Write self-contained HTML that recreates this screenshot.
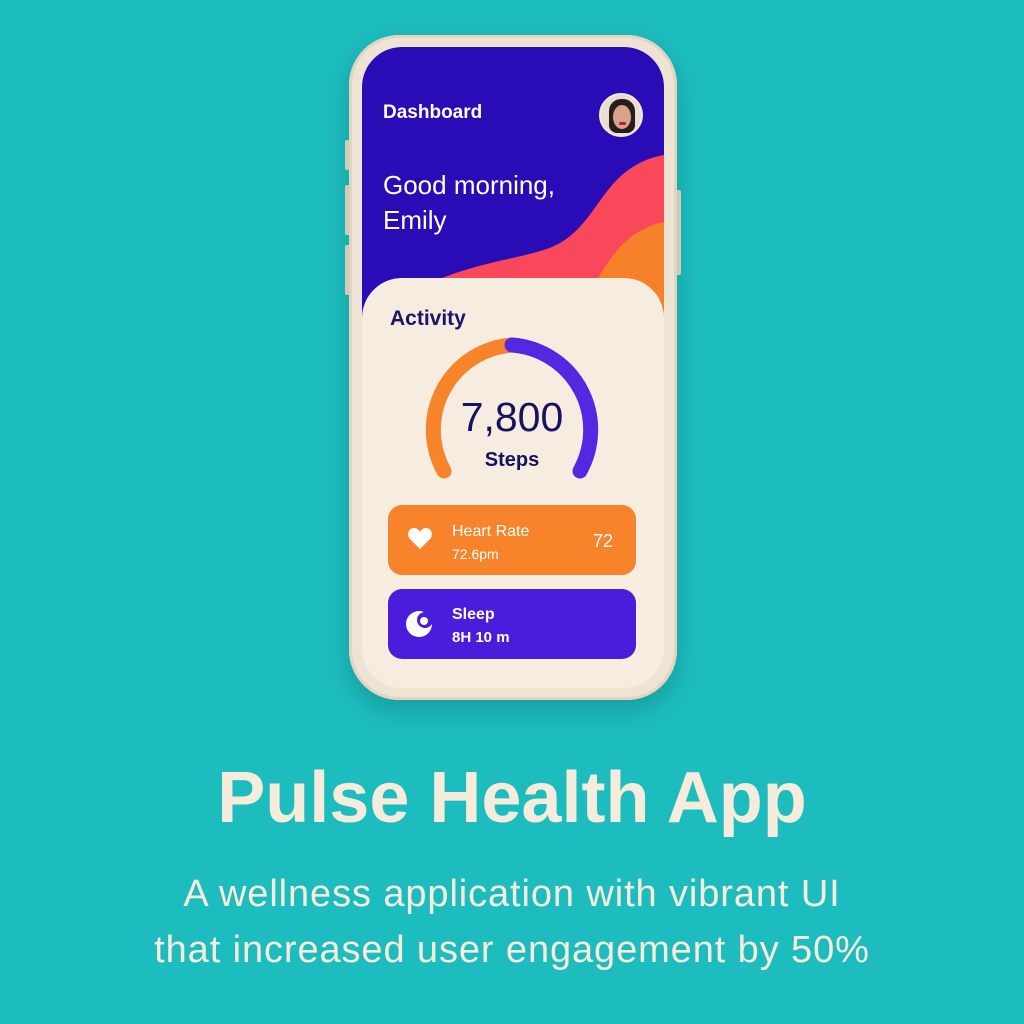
<!DOCTYPE html>
<html><head><meta charset="utf-8"><style>
*{margin:0;padding:0;box-sizing:border-box}
body{width:1024px;height:1024px;background:#1dbdbf;position:relative;overflow:hidden;font-family:"Liberation Sans",sans-serif}
.phone{position:absolute;left:349px;top:35px;width:328px;height:665px;border-radius:50px;background:#efe4d4;box-shadow:0 10px 25px rgba(0,60,60,.25),inset 0 0 0 3px #e2d4c2}
.btn{position:absolute;background:#e8dccb;width:5px;border-radius:2px}
.screen{position:absolute;left:362px;top:47px;width:302px;height:641px;border-radius:40px;overflow:hidden;background:#f6ecdf}
.abs{position:absolute}
.t{color:#fff;position:absolute}
.card{position:absolute;left:388px;width:248px;height:70px;border-radius:14px}
.big{position:absolute;width:1024px;text-align:center;color:#f6ecdc}
</style></head><body>
<div class="btn" style="left:345px;top:140px;height:30px"></div>
<div class="btn" style="left:345px;top:185px;height:50px"></div>
<div class="btn" style="left:345px;top:245px;height:50px"></div>
<div class="btn" style="left:676px;top:190px;height:85px"></div>
<div class="phone"></div>
<div class="screen">
<svg class="abs" style="left:0;top:0" width="302" height="641">
<rect width="302" height="641" fill="#f6ecdf"/>
<rect width="302" height="290" fill="#2a0cb6"/>
<path d="M60 240 C110 215 160 212 190 200 C225 185 235 150 260 128 C275 115 290 110 302 108 L302 290 L60 290 Z" fill="#f8485a"/>
<path d="M225 250 C240 225 255 195 280 183 C290 178 296 176 302 175 L302 290 L225 290 Z" fill="#f7802a"/>
<rect x="0" y="231" width="302" height="420" rx="40" fill="#f6ecdf"/>
</svg>
</div>
<div class="t" style="left:383px;top:102px;font-size:19px;font-weight:bold">Dashboard</div>
<div class="abs" style="left:599px;top:93px;width:44px;height:44px;border-radius:50%;background:#e8ddd0;border:2px solid #f2e8da;overflow:hidden">
<div class="abs" style="left:8px;top:4px;width:26px;height:34px;border-radius:12px 12px 8px 8px;background:#2a1c1c"></div>
<div class="abs" style="left:12px;top:10px;width:18px;height:24px;border-radius:50%;background:#d9a28c"></div>
<div class="abs" style="left:18px;top:27px;width:7px;height:3px;border-radius:2px;background:#b02030"></div>
</div>
<div class="t" style="left:383px;top:168px;font-size:26px;line-height:35px">Good morning,<br>Emily</div>
<div class="abs" style="left:390px;top:307px;font-size:21px;font-weight:bold;color:#1c1466">Activity</div>
<svg class="abs" style="left:412px;top:330px" width="200" height="160">
<path d="M32 141 A85 85 0 0 1 100 15" fill="none" stroke="#f7832a" stroke-width="15" stroke-linecap="round"/>
<path d="M100 15 A85 85 0 0 1 168 141" fill="none" stroke="#5428e0" stroke-width="15" stroke-linecap="round"/>
</svg>
<div class="abs" style="left:412px;top:394px;width:200px;text-align:center;font-size:41px;color:#17125e">7,800</div>
<div class="abs" style="left:412px;top:449px;width:200px;text-align:center;font-size:20px;font-weight:bold;color:#17125e">Steps</div>
<div class="card" style="top:505px;background:#f7832a"></div>
<svg class="abs" style="left:407px;top:527px" width="26" height="24"><path d="M13 22 L3 12 C-1 7 2 1 7 1 C10 1 12 3 13 5 C14 3 16 1 19 1 C24 1 27 7 23 12 Z" fill="#fff"/></svg>
<div class="t" style="left:452px;top:523px;font-size:16px">Heart Rate</div>
<div class="t" style="left:452px;top:546px;font-size:14px">72.6pm</div>
<div class="t" style="left:593px;top:531px;font-size:18px">72</div>
<div class="card" style="top:589px;background:#4a1cdb"></div>
<svg class="abs" style="left:405px;top:610px" width="30" height="30"><circle cx="14" cy="14" r="13" fill="#fff"/><circle cx="20" cy="10" r="8" fill="#4a1cdb"/><circle cx="19" cy="11" r="4" fill="#fff"/></svg>
<div class="t" style="left:452px;top:606px;font-size:16px;font-weight:bold">Sleep</div>
<div class="t" style="left:452px;top:629px;font-size:15px;font-weight:bold">8H 10 m</div>
<div class="big" style="top:757px;font-size:72px;font-weight:bold">Pulse Health App</div>
<div class="big" style="top:866px;font-size:38px;line-height:56px;letter-spacing:0.9px">A wellness application with vibrant UI<br>that increased user engagement by 50%</div>
</body></html>
